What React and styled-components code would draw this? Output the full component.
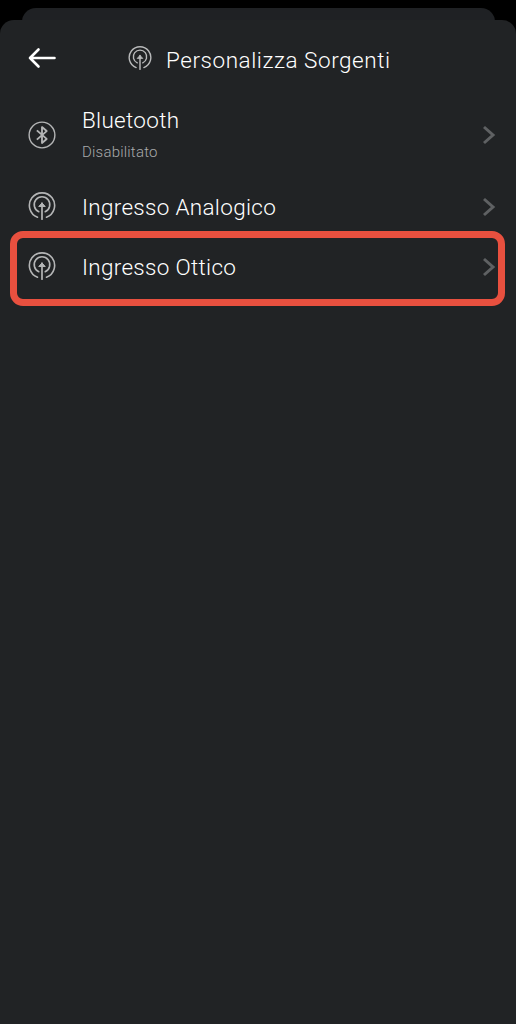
import React from "react";
import styled, { createGlobalStyle } from "styled-components";

const Global = createGlobalStyle`
  html, body { margin: 0; padding: 0; background: #000; }
  body { font-family: "Roboto", "Liberation Sans", sans-serif; }
`;

const Screen = styled.div`
  width: 516px;
  height: 1024px;
  background: #000;
  padding-top: 8px;
  box-sizing: border-box;
  overflow: hidden;
  display: flex;
  flex-direction: column;
`;

const BackCard = styled.div`
  height: 20px;
  margin: 0 21px 0 22px;
  background: #1f2124;
  border-radius: 14px 14px 0 0;
  flex: none;
`;

const Sheet = styled.main`
  flex: 1;
  margin-top: -8px;
  background: #212325;
  border-radius: 14px 14px 0 0;
  padding-top: 14px;
  display: flex;
  flex-direction: column;
`;

const Header = styled.header`
  height: 48px;
  display: flex;
  align-items: center;
  padding-left: 28px;
  color: #b9babb;
`;

const BackButton = styled.button`
  width: 100px;
  height: 32px;
  padding: 0;
  border: 0;
  background: none;
  color: #fff;
  display: flex;
  align-items: center;
`;

const Title = styled.h1`
  margin: 4px 0 0 14px;
  font-size: 22.5px;
  font-weight: 300;
  letter-spacing: 0.55px;
  color: #fff;
`;

const List = styled.ul`
  list-style: none;
  margin: 23px 0 0;
  padding: 0;
`;

const Row = styled.li`
  position: relative;
  box-sizing: border-box;
  height: ${(p) => p.$h}px;
  display: flex;
  align-items: ${(p) => (p.$top ? "flex-start" : "center")};
  padding: 0 20px ${(p) => p.$pb || 0}px 28px;
`;

const IconSlot = styled.div`
  width: 28px;
  height: 32px;
  margin-right: 26px;
  flex: none;
  display: flex;
  align-items: center;
  justify-content: center;
  color: #b4b5b6;
  margin-top: ${(p) => p.$mt || 0}px;
`;

const Labels = styled.div`
  flex: 1;
  display: flex;
  flex-direction: column;
`;

const Name = styled.span`
  font-size: 22.5px;
  font-weight: 300;
  line-height: 30px;
  letter-spacing: 0.3px;
  color: #fff;
`;

const Sub = styled.span`
  font-size: 15px;
  font-weight: 300;
  line-height: 18px;
  letter-spacing: 0.2px;
  margin-top: 8px;
  color: #a8aaac;
`;

const Chevron = styled.svg`
  flex: none;
  color: #5f6163;
  margin-top: ${(p) => p.$mt || 0}px;
`;

const Highlight = styled.div`
  position: absolute;
  left: 10px;
  right: 11px;
  top: 0;
  height: 75px;
  box-sizing: border-box;
  border: 7px solid #e8503f;
  border-radius: 13px;
  pointer-events: none;
`;

const BluetoothIcon = () => (
  <svg width="30" height="30" viewBox="0 0 30 30" fill="none" stroke="currentColor">
    <circle cx="15" cy="15" r="13.8" strokeWidth="1.5" />
    <path d="M9.5 10 20 19.2 15 23.5V6.5l5 4.3L9.5 20" strokeWidth="2" strokeLinejoin="round" />
  </svg>
);

const SourceIcon = ({ size = 28 }) => (
  <svg width={size} height={size} viewBox="0 0 28 28" fill="none" stroke="currentColor" strokeLinecap="round">
    <path d="M9.5 25.2A12.6 12.6 0 1 1 18.5 25.2" strokeWidth="1.6" />
    <path d="M10.8 19.7A7.8 7.8 0 1 1 17.2 19.7" strokeWidth="1.6" />
    <path d="M14 27.2V11" strokeWidth="1.7" />
    <path d="M11 14.2 14 11l3 3.2Z" fill="currentColor" strokeWidth="1" strokeLinejoin="round" />
  </svg>
);

const ChevronIcon = ({ mt }) => (
  <Chevron $mt={mt} width="14" height="20" viewBox="0 0 14 20" fill="none" stroke="currentColor" strokeWidth="3">
    <path d="M2 2l9 8-9 8" />
  </Chevron>
);

export default function App() {
  return (
    <Screen>
      <Global />
      <BackCard />
      <Sheet>
        <Header>
          <BackButton aria-label="Indietro">
            <svg width="28" height="22" viewBox="0 0 28 22" fill="none" stroke="currentColor" strokeWidth="2.6" strokeLinecap="round" strokeLinejoin="round">
              <path d="M26.5 11H2M10.5 2.5 2 11l8.5 8.5" />
            </svg>
          </BackButton>
          <SourceIcon size={24} />
          <Title>Personalizza Sorgenti</Title>
        </Header>
        <List>
          <Row $h={77} $top>
            <IconSlot $mt={14}><BluetoothIcon /></IconSlot>
            <Labels>
              <Name>Bluetooth</Name>
              <Sub>Disabilitato</Sub>
            </Labels>
            <ChevronIcon mt={20} />
          </Row>
          <Row $h={49}>
            <IconSlot $mt={-2}><SourceIcon /></IconSlot>
            <Labels><Name>Ingresso Analogico</Name></Labels>
            <ChevronIcon />
          </Row>
          <Row $h={75} $pb={3}>
            <IconSlot $mt={-2}><SourceIcon /></IconSlot>
            <Labels><Name>Ingresso Ottico</Name></Labels>
            <ChevronIcon />
            <Highlight />
          </Row>
        </List>
      </Sheet>
    </Screen>
  );
}
